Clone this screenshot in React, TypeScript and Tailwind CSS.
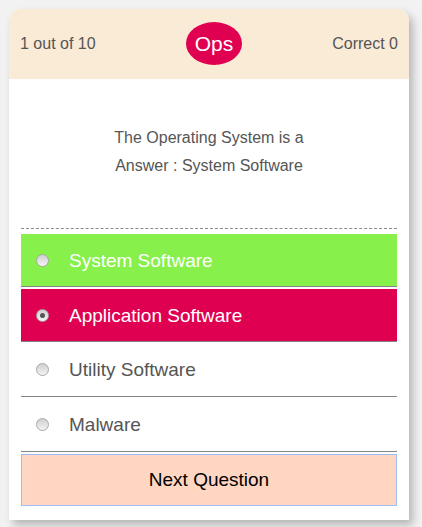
import React from "react";

function Radio({ checked }: { checked?: boolean }) {
  return (
    <span className="flex h-[13px] w-[13px] items-center justify-center rounded-full border border-[#a8a8a8] bg-gradient-to-b from-[#cfcfcf] to-[#f4f4f4]">
      {checked && <span className="h-[5px] w-[5px] rounded-full bg-[#555]" />}
    </span>
  );
}

function Option({
  label,
  bg,
  text,
  h,
  checked,
  mt,
}: {
  label: string;
  bg: string;
  text: string;
  h: string;
  checked?: boolean;
  mt: string;
}) {
  return (
    <div className={`${mt} border-b border-[#858585]`}>
      <div className={`flex ${h} items-center ${bg}`}>
        <div className="flex w-[42px] justify-center">
          <Radio checked={checked} />
        </div>
        <span className={`ml-[6px] pt-[2px] text-[19px] ${text}`}>{label}</span>
      </div>
    </div>
  );
}

export default function App() {
  return (
    <div
      className="min-h-[527px] w-full bg-[#f2f2f2] pl-[9px] pt-[9px]"
      style={{ fontFamily: '"Liberation Sans", Arial, sans-serif' }}
    >
      <div className="w-[400px] overflow-hidden rounded-t-[12px] bg-white pb-[14px] shadow-[4px_5px_8px_rgba(0,0,0,0.25)]">
        <div className="relative flex h-[70px] items-center justify-between bg-[#faebd7] px-[11px] text-[16px] text-[#555]">
          <span>1 out of 10</span>
          <span className="absolute left-[177px] top-[13px] flex h-[43px] w-[56px] items-center justify-center rounded-[50%] bg-[#e00052] text-[21px] text-white">
            Ops
          </span>
          <span>Correct 0</span>
        </div>
        <div className="px-[12px]">
          <div className="flex h-[150px] flex-col items-center pt-[45px] text-[16px] leading-[28px] text-[#555] border-b border-dashed border-[#8a8a8a]">
            <div>The Operating System is a</div>
            <div>Answer : System Software</div>
          </div>
          <Option label="System Software" bg="bg-[#87f04a]" text="text-white" h="h-[52px]" mt="mt-[5px]" />
          <Option label="Application Software" bg="bg-[#e00052]" text="text-white" h="h-[52px]" mt="mt-[2px]" checked />
          <Option label="Utility Software" bg="bg-white" text="text-[#555]" h="h-[54px]" mt="mt-0" />
          <Option label="Malware" bg="bg-white" text="text-[#555]" h="h-[54px]" mt="mt-0" />
          <button className="mt-[2px] flex h-[52px] w-full items-center justify-center border border-[#9fbdf2] bg-[#ffd6c2] text-[19px] text-black">
            Next Question
          </button>
        </div>
      </div>
    </div>
  );
}
